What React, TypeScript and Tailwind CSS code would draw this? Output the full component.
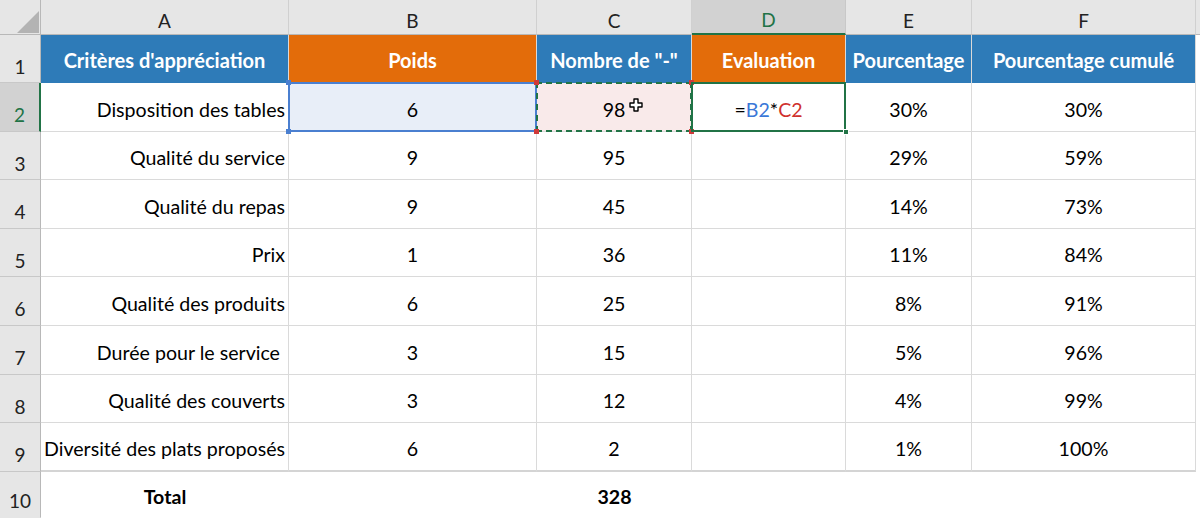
import React from "react";

const cols = ["A", "B", "C", "D", "E", "F"];

const rows: [string, string, string, string, string][] = [
  ["Disposition des tables", "6", "98", "30%", "30%"],
  ["Qualité du service", "9", "95", "29%", "59%"],
  ["Qualité du repas", "9", "45", "14%", "73%"],
  ["Prix", "1", "36", "11%", "84%"],
  ["Qualité des produits", "6", "25", "8%", "91%"],
  ["Durée pour le service ", "3", "15", "5%", "96%"],
  ["Qualité des couverts", "3", "12", "4%", "99%"],
  ["Diversité des plats proposés", "6", "2", "1%", "100%"],
];

const headers = [
  { label: "Critères d'appréciation", bg: "bg-[#2e7bb8]" },
  { label: "Poids", bg: "bg-[#e36c0a]" },
  { label: 'Nombre de "-"', bg: "bg-[#2e7bb8]" },
  { label: "Evaluation", bg: "bg-[#e36c0a]" },
  { label: "Pourcentage", bg: "bg-[#2e7bb8]" },
  { label: "Pourcentage cumulé", bg: "bg-[#2e7bb8]" },
];

const RowHead = ({ n, active = false, last = false }: { n: number; active?: boolean; last?: boolean }) => (
  <div
    className={`flex items-end justify-center pb-[1px] text-[19px] border-b ${
      last ? "border-transparent" : "border-[#c8c8c8]"
    } ${
      active
        ? "bg-[#d2d2d2] text-[#217346] border-r-2 border-r-[#217346]"
        : "bg-[#e6e6e6] text-[#222] border-r border-r-[#b8b8b8]"
    }`}
  >
    {n}
  </div>
);

const Cell = ({ children, className = "" }: { children?: React.ReactNode; className?: string }) => (
  <div className={`flex items-center pt-[5px] border-r border-b border-[#dadada] text-[19.6px] text-black ${className}`}>
    {children}
  </div>
);

const Handle = ({ pos, color }: { pos: string; color: string }) => (
  <span className={`absolute h-[5px] w-[5px] ${pos} ${color}`} />
);

export default function App() {
  return (
    <div
      className="h-[518px] w-[1200px] overflow-hidden bg-white"
      style={{ fontFamily: "Lato, 'Liberation Sans', sans-serif" }}
    >
      <div className="grid grid-cols-[41px_248px_248px_155px_154px_126px_224px_4px] grid-rows-[35px_48px_repeat(8,48.6px)_46px]">
        {/* column header bar */}
        <div className="relative bg-[#e6e6e6] border-b border-r border-[#b8b8b8]">
          <svg className="absolute left-[17px] top-[11px]" width="22" height="22" viewBox="0 0 22 22">
            <polygon points="22,0 22,22 0,22" fill="#b3b3b3" />
          </svg>
        </div>
        {cols.map((c) =>
          c === "D" ? (
            <div
              key={c}
              className="flex items-center justify-center pt-[8px] bg-[#d2d2d2] text-[#217346] text-[19px] border-b-2 border-[#217346] border-r border-r-[#c8c8c8]"
            >
              {c}
            </div>
          ) : (
            <div
              key={c}
              className="flex items-center justify-center pt-[8px] bg-[#e6e6e6] text-[#222] text-[19px] border-b border-[#b8b8b8] border-r border-r-[#d0d0d0]"
            >
              {c}
            </div>
          )
        )}
        <div className="bg-[#e6e6e6] border-b border-[#b8b8b8]" />

        {/* row 1 */}
        <RowHead n={1} />
        {headers.map((h) => (
          <div
            key={h.label}
            className={`flex items-center justify-center pt-[2px] ${h.bg} border-r border-[#d9d9d9] text-[20px] font-bold text-white whitespace-nowrap`}
          >
            {h.label}
          </div>
        ))}
        <div className="bg-white" />

        {/* rows 2-9 */}
        {rows.map((r, i) => {
          const first = i === 0;
          const last = i === rows.length - 1;
          const bottom = last ? "border-b-2 border-b-[#d4d4d4]" : "";
          return (
            <React.Fragment key={r[0]}>
              <RowHead n={i + 2} active={first} />
              <Cell className={`justify-end pr-[3px] whitespace-pre ${bottom}`}>{r[0]}</Cell>
              {first ? (
                <Cell className="relative justify-center bg-[#e8eef8]">
                  <span className="absolute inset-[-1px] border-2 border-[#4a7fd0]" />
                  <Handle pos="-left-[3px] -top-[3px]" color="bg-[#4a7fd0]" />
                  <Handle pos="-right-[3px] -top-[3px]" color="bg-[#4a7fd0]" />
                  <Handle pos="-left-[3px] -bottom-[3px]" color="bg-[#4a7fd0]" />
                  <Handle pos="-right-[3px] -bottom-[3px]" color="bg-[#4a7fd0]" />
                  {r[1]}
                </Cell>
              ) : (
                <Cell className={`justify-center ${bottom}`}>{r[1]}</Cell>
              )}
              {first ? (
                <Cell className="relative justify-center bg-[#f9eaea]">
                  <span className="absolute inset-[-1px] border-2 border-dashed border-[#217346]" />
                  <Handle pos="-left-[3px] -top-[3px]" color="bg-[#d03a3a]" />
                  <Handle pos="-right-[3px] -top-[3px]" color="bg-[#d03a3a]" />
                  <Handle pos="-left-[3px] -bottom-[3px]" color="bg-[#d03a3a]" />
                  <Handle pos="-right-[3px] -bottom-[3px]" color="bg-[#d03a3a]" />
                  {r[2]}
                  <svg className="absolute left-[92px] top-[15px]" width="14" height="14" viewBox="0 0 14 14">
                    <path
                      d="M5 1h4v4h4v4h-4v4h-4v-4h-4v-4h4z"
                      fill="#fff"
                      stroke="#000"
                      strokeWidth="1.4"
                      strokeLinejoin="round"
                    />
                  </svg>
                </Cell>
              ) : (
                <Cell className={`justify-center ${bottom}`}>{r[2]}</Cell>
              )}
              {first ? (
                <Cell className="relative justify-center">
                  <span className="absolute inset-[-1px] border-2 border-[#217346]" />
                  <span className="absolute -right-[4px] -bottom-[4px] h-[6px] w-[6px] bg-[#217346] border border-white" />
                  <span>
                    =<span className="text-[#3a78d8]">B2</span>*<span className="text-[#d0312d]">C2</span>
                  </span>
                </Cell>
              ) : (
                <Cell className={bottom} />
              )}
              <Cell className={`justify-center ${bottom}`}>{r[3]}</Cell>
              <Cell className={`justify-center ${bottom}`}>{r[4]}</Cell>
              <div className="bg-white" />
            </React.Fragment>
          );
        })}

        {/* row 10 */}
        <RowHead n={10} last />
        <div className="flex items-center justify-center pt-[3px] text-[19.6px] font-bold text-black">Total</div>
        <div />
        <div className="flex items-center justify-center pt-[3px] text-[19.6px] font-bold text-black">328</div>
        <div />
        <div />
        <div />
        <div />
      </div>
    </div>
  );
}
